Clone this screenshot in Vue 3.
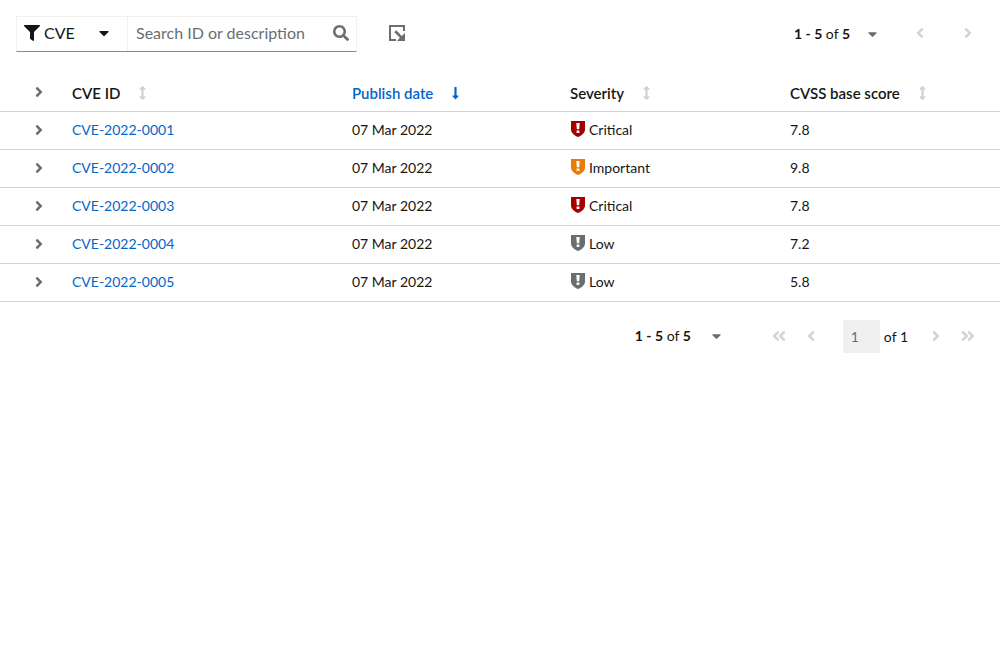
<script setup>
import { ref } from 'vue'

const angleRight =
  'M224.3 273l-136 136c-9.4 9.4-24.6 9.4-33.9 0l-22.6-22.6c-9.4-9.4-9.4-24.6 0-33.9l96.4-96.4-96.4-96.4c-9.4-9.4-9.4-24.6 0-33.9L54.3 103c9.4-9.4 24.6-9.4 33.9 0l136 136c9.5 9.4 9.5 24.6.1 34z'
const angleLeft =
  'M31.7 239l136-136c9.4-9.4 24.6-9.4 33.9 0l22.6 22.6c9.4 9.4 9.4 24.6 0 33.9L127.9 256l96.4 96.4c9.4 9.4 9.4 24.6 0 33.9L201.7 409c-9.4 9.4-24.6 9.4-33.9 0l-136-136c-9.5-9.4-9.5-24.6-.1-34z'
const caretDown =
  'M31.3 192h257.3c17.8 0 26.7 21.5 14.1 34.1L174.1 354.8c-7.8 7.8-20.5 7.8-28.3 0L17.2 226.1C4.6 213.5 13.5 192 31.3 192z'
const arrowDown =
  'M168 345.941V44c0-6.627-5.373-12-12-12h-56c-6.627 0-12 5.373-12 12v301.941H41.941c-21.382 0-32.09 25.851-16.971 40.971l86.059 86.059c9.373 9.373 24.569 9.373 33.941 0l86.059-86.059c15.119-15.119 4.411-40.971-16.971-40.971H168z'
const arrowsVertical =
  'M214.059 377.941H168V134.059h46.059c21.382 0 32.09-25.851 16.971-40.971L144.971 7.029c-9.373-9.373-24.568-9.373-33.941 0L24.971 93.088c-15.119 15.119-4.411 40.971 16.971 40.971H88v243.882H41.941c-21.382 0-32.09 25.851-16.971 40.971l86.059 86.059c9.373 9.373 24.568 9.373 33.941 0l86.059-86.059c15.12-15.119 4.412-40.971-16.97-40.971z'

const search = ref('')
const page = ref('1')

const columns = [
  { key: 'id', label: 'CVE ID' },
  { key: 'date', label: 'Publish date', sorted: true },
  { key: 'severity', label: 'Severity' },
  { key: 'score', label: 'CVSS base score' }
]

const rows = [
  { id: 'CVE-2022-0001', date: '07 Mar 2022', severity: 'Critical', score: '7.8' },
  { id: 'CVE-2022-0002', date: '07 Mar 2022', severity: 'Important', score: '9.8' },
  { id: 'CVE-2022-0003', date: '07 Mar 2022', severity: 'Critical', score: '7.8' },
  { id: 'CVE-2022-0004', date: '07 Mar 2022', severity: 'Low', score: '7.2' },
  { id: 'CVE-2022-0005', date: '07 Mar 2022', severity: 'Low', score: '5.8' }
]
</script>

<template>
  <main class="page">
    <div class="toolbar">
      <div class="filter">
        <button class="filter-type" type="button" aria-haspopup="listbox">
          <svg class="icon-16" viewBox="0 0 512 512" aria-hidden="true">
            <path d="M487.976 0H24.028C2.71 0-8.047 25.866 7.058 40.971L192 225.941V432c0 7.831 3.821 15.17 10.237 19.662l80 55.98C298.02 518.69 320 507.493 320 487.98V225.941l184.947-184.97C520.021 25.896 509.338 0 487.976 0z" />
          </svg>
          <span class="filter-name">CVE</span>
          <svg class="caret-lg" viewBox="0 0 320 512" aria-hidden="true"><path :d="caretDown" /></svg>
        </button>
        <div class="search">
          <input v-model="search" class="search-input" type="text" placeholder="Search ID or description" aria-label="Search ID or description" />
          <svg class="icon-16 search-icon" viewBox="0 0 512 512" aria-hidden="true">
            <path d="M505 442.7L405.3 343c-4.5-4.5-10.6-7-17-7H372c27.6-35.3 44-79.7 44-128C416 93.1 322.9 0 208 0S0 93.1 0 208s93.1 208 208 208c48.3 0 92.7-16.4 128-44v16.3c0 6.4 2.5 12.5 7 17l99.7 99.7c9.4 9.4 24.6 9.4 33.9 0l28.3-28.3c9.4-9.4 9.4-24.6.1-34zM208 336c-70.7 0-128-57.2-128-128 0-70.7 57.2-128 128-128 70.7 0 128 57.2 128 128 0 70.7-57.2 128-128 128z" />
          </svg>
        </div>
      </div>

      <button class="export" type="button" aria-label="Export">
        <svg viewBox="0 0 16 16" width="16" height="16" aria-hidden="true">
          <path d="M0 0h16v6h-2V2H2v12h5v2H0z" />
          <path d="M5.300 7.200l1.900-1.900 5.600 5.600L16 8v8H8l2.900-3.200z" />
        </svg>
      </button>

      <div class="pager-top">
        <button class="range" type="button" aria-haspopup="listbox">
          <span><b>1 - 5</b> of <b>5</b></span>
          <svg class="caret" viewBox="0 0 320 512" aria-hidden="true"><path :d="caretDown" /></svg>
        </button>
        <button class="nav nav-wide" type="button" disabled aria-label="Previous page">
          <svg class="angle" viewBox="0 0 256 512" aria-hidden="true"><path :d="angleLeft" /></svg>
        </button>
        <button class="nav nav-wide" type="button" disabled aria-label="Next page">
          <svg class="angle" viewBox="0 0 256 512" aria-hidden="true"><path :d="angleRight" /></svg>
        </button>
      </div>
    </div>

    <table class="cves">
      <colgroup>
        <col class="col-toggle" />
        <col class="col-id" />
        <col class="col-date" />
        <col class="col-severity" />
        <col class="col-score" />
      </colgroup>
      <thead>
        <tr>
          <th class="toggle-cell">
            <button class="toggle" type="button" aria-label="Expand all">
              <svg class="angle" viewBox="0 0 256 512" aria-hidden="true"><path :d="angleRight" /></svg>
            </button>
          </th>
          <th v-for="c in columns" :key="c.key" scope="col" :aria-sort="c.sorted ? 'descending' : 'none'">
            <button class="sort" :class="{ sorted: c.sorted }" type="button">
              <span>{{ c.label }}</span>
              <svg class="sort-icon" viewBox="0 0 256 512" aria-hidden="true">
                <path :d="c.sorted ? arrowDown : arrowsVertical" />
              </svg>
            </button>
          </th>
        </tr>
      </thead>
      <tbody>
        <tr v-for="r in rows" :key="r.id">
          <td class="toggle-cell">
            <button class="toggle" type="button" :aria-label="'Expand ' + r.id">
              <svg class="angle" viewBox="0 0 256 512" aria-hidden="true"><path :d="angleRight" /></svg>
            </button>
          </td>
          <td><a :href="'#' + r.id">{{ r.id }}</a></td>
          <td>{{ r.date }}</td>
          <td>
            <span class="severity">
              <svg class="shield" :class="r.severity.toLowerCase()" viewBox="0 0 14 16" aria-hidden="true">
                <path d="M0 0h14v8.500c0 3.500-3.500 6.300-7 7.500-3.500-1.200-7-4-7-7.500z" />
                <path class="mark" d="M5.300 2h3.400l-.5 6.300H5.800zM5.600 9.400h2.800v2.500H5.600z" />
              </svg>
              <span>{{ r.severity }}</span>
            </span>
          </td>
          <td>{{ r.score }}</td>
        </tr>
      </tbody>
    </table>

    <div class="pager-bottom">
      <button class="range" type="button" aria-haspopup="listbox">
        <span><b>1 - 5</b> of <b>5</b></span>
        <svg class="caret" viewBox="0 0 320 512" aria-hidden="true"><path :d="caretDown" /></svg>
      </button>
      <nav class="pages" aria-label="Pagination">
        <button class="nav" type="button" disabled aria-label="First page">
          <svg class="angle-double" viewBox="0 0 448 512" aria-hidden="true">
            <path :d="angleLeft" /><path :d="angleLeft" transform="translate(192 0)" />
          </svg>
        </button>
        <button class="nav" type="button" disabled aria-label="Previous page">
          <svg class="angle" viewBox="0 0 256 512" aria-hidden="true"><path :d="angleLeft" /></svg>
        </button>
        <span class="page-select">
          <input v-model="page" class="page-input" type="text" disabled aria-label="Current page" />
          <span>of 1</span>
        </span>
        <button class="nav" type="button" disabled aria-label="Next page">
          <svg class="angle" viewBox="0 0 256 512" aria-hidden="true"><path :d="angleRight" /></svg>
        </button>
        <button class="nav" type="button" disabled aria-label="Last page">
          <svg class="angle-double" viewBox="0 0 448 512" aria-hidden="true">
            <path :d="angleRight" /><path :d="angleRight" transform="translate(192 0)" />
          </svg>
        </button>
      </nav>
    </div>
  </main>
</template>

<style>
body {
  margin: 0;
  background: #fff;
}
</style>

<style scoped>
.page {
  font-family: Lato, "Noto Sans", sans-serif;
  font-size: 14px;
  line-height: 20px;
  color: #151515;
}

button,
input {
  margin: 0;
  padding: 0;
  border: 0;
  background: none;
  font: inherit;
  color: inherit;
}

svg {
  display: block;
  flex: none;
  fill: currentColor;
}

b {
  font-weight: 700;
}

.toolbar {
  display: flex;
  align-items: center;
  padding: 16px 8px 22px 16px;
}

.filter {
  display: flex;
  box-sizing: border-box;
  width: 341px;
  height: 36px;
  border: 1px solid #f0f0f0;
  border-bottom-color: #8a8d90;
  font-size: 16px;
}

.filter-type {
  display: flex;
  flex: none;
  box-sizing: border-box;
  align-items: center;
  width: 111px;
  padding: 0 7px 2px;
  border-right: 1px solid #f0f0f0;
}

.filter-name {
  margin: 0 auto 0 4px;
}

.icon-16 {
  width: 16px;
  height: 16px;
}

.caret-lg {
  width: 10px;
  height: 16px;
  margin-right: 11px;
}

.search {
  display: flex;
  flex: 1;
  align-items: center;
  min-width: 0;
  padding: 0 7px 2px 8px;
}

.search-input {
  flex: 1;
  min-width: 0;
  height: 30px;
  padding-bottom: 2px;
  outline: none;
}

.search-input::placeholder {
  color: #6a6e73;
  opacity: 1;
}

.search-icon {
  color: #6a6e73;
}

.export {
  margin-left: 32px;
  padding-bottom: 2px;
  color: #6a6e73;
}

.pager-top {
  display: flex;
  align-items: center;
  margin-left: auto;
}

.range {
  display: flex;
  align-items: center;
  gap: 18px;
}

.caret {
  width: 9px;
  height: 16px;
  color: #6a6e73;
}

.nav {
  display: flex;
  justify-content: center;
  width: 32px;
  padding-bottom: 2px;
  color: #d2d2d2;
}

.nav-wide {
  width: 48px;
}

.pager-top .range {
  margin-right: 19px;
}

.angle {
  width: 8px;
  height: 16px;
}

.angle-double {
  width: 14px;
  height: 16px;
}

.cves {
  width: 100%;
  table-layout: fixed;
  border-collapse: collapse;
}

.col-toggle {
  width: 56px;
}

.col-id {
  width: 28%;
}

.col-date {
  width: 21.8%;
}

.col-severity {
  width: 22%;
}

th,
td {
  height: 37px;
  padding: 0 0 0 16px;
  border-bottom: 1px solid #d2d2d2;
  text-align: left;
  vertical-align: middle;
}

td {
  height: 35px;
  padding-bottom: 2px;
}

.toggle-cell {
  padding-left: 35px;
}

.toggle {
  display: block;
  color: #6a6e73;
}

th .toggle {
  padding-bottom: 2px;
}

.sort {
  display: flex;
  align-items: center;
  gap: 19px;
  font-size: 15px;
  font-weight: 600;
}

.sort-icon {
  width: 7px;
  height: 14px;
  color: #d2d2d2;
}

.sorted,
.sorted .sort-icon {
  color: #06c;
}

a {
  color: #06c;
  text-decoration: none;
}

.severity {
  display: flex;
  align-items: center;
  gap: 4px;
  padding-left: 1px;
}

.shield {
  width: 14px;
  height: 16px;
  margin-bottom: 2px;
}

.critical {
  color: #a30000;
}

.important {
  color: #ec7a08;
}

.low {
  color: #6a6e73;
}

.mark {
  fill: #fff;
}

.pager-bottom {
  display: flex;
  align-items: center;
  justify-content: flex-end;
  padding: 18px 16px;
}

.pager-bottom .range {
  gap: 21px;
  padding-bottom: 2px;
}

.pages {
  display: flex;
  align-items: center;
  margin-left: 42px;
}

.page-select {
  display: flex;
  align-items: center;
  gap: 4px;
  margin: 0 12px 0 16px;
}

.page-input {
  box-sizing: border-box;
  width: 37px;
  height: 33px;
  padding: 0 8px;
  background: #f0f0f0;
  color: #6a6e73;
}
</style>
